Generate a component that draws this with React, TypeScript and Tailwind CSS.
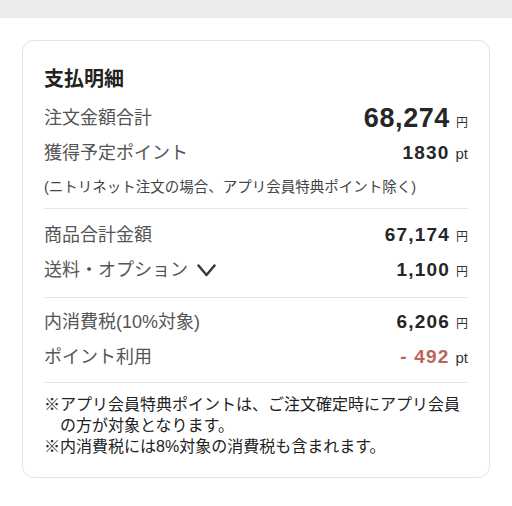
const JP = "font-['Liberation_Sans','Noto_Sans_CJK_JP',sans-serif]"

function Amount({ value, unit, big, red }: { value: string; unit: string; big?: boolean; red?: boolean }) {
  return (
    <div className="flex items-baseline gap-[6px]">
      <span
        className={`font-bold ${big ? 'text-[27px] tracking-[0.6px]' : 'text-[19px] tracking-[1.2px]'} ${red ? 'text-[#c0625c]' : 'text-[#262626]'}`}
      >
        {value}
      </span>
      <span className={`${unit === '円' ? 'text-[12px]' : 'text-[15px]'} text-[#333]`}>{unit}</span>
    </div>
  )
}

function Row({ label, children }: { label: React.ReactNode; children: React.ReactNode }) {
  return (
    <div className="flex h-[35px] items-center justify-between">
      <div className="text-[18px] text-[#555]">{label}</div>
      {children}
    </div>
  )
}

export default function App() {
  return (
    <div className={`h-[506px] w-[512px] bg-white ${JP}`}>
      <div className="h-[18px] bg-[#ebebeb]" />
      <div className="mx-[22px] mt-[22px] rounded-[12px] border border-[#e2e2e2] px-[21px] pt-[24px] pb-[20px]">
        <h2 className="text-[20px] leading-[28px] font-bold text-[#222]">支払明細</h2>
        <div className="mt-[8px]">
          <Row label="注文金額合計">
            <Amount value="68,274" unit="円" big />
          </Row>
          <Row label="獲得予定ポイント">
            <Amount value="1830" unit="pt" />
          </Row>
          <div className="flex h-[34px] items-center text-[14.5px] text-[#444]">
            (ニトリネット注文の場合、アプリ会員特典ポイント除く)
          </div>
        </div>
        <div className="mt-[3px] border-t border-[#e5e5e5] pt-[9px] pb-[9px]">
          <Row label="商品合計金額">
            <Amount value="67,174" unit="円" />
          </Row>
          <Row
            label={
              <span className="flex items-center gap-[9px]">
                送料・オプション
                <svg width="19" height="13" viewBox="0 0 19 13" fill="none">
                  <path d="M1.5 1.5 L9.5 11 L17.5 1.5" stroke="#3a3a3a" strokeWidth="2.5" strokeLinecap="round" strokeLinejoin="round" />
                </svg>
              </span>
            }
          >
            <Amount value="1,100" unit="円" />
          </Row>
        </div>
        <div className="border-t border-[#e5e5e5] pt-[7px] pb-[7px]">
          <Row label="内消費税(10%対象)">
            <Amount value="6,206" unit="円" />
          </Row>
          <Row label="ポイント利用">
            <Amount value="- 492" unit="pt" red />
          </Row>
        </div>
        <div className="border-t border-[#e5e5e5] pt-[11px] text-[16px] leading-[21px] text-[#222]">
          <p className="pl-[16px] -indent-[16px]">
            ※アプリ会員特典ポイントは、ご注文確定時にアプリ会員の方が対象となります。
          </p>
          <p>※内消費税には8%対象の消費税も含まれます。</p>
        </div>
      </div>
    </div>
  )
}
